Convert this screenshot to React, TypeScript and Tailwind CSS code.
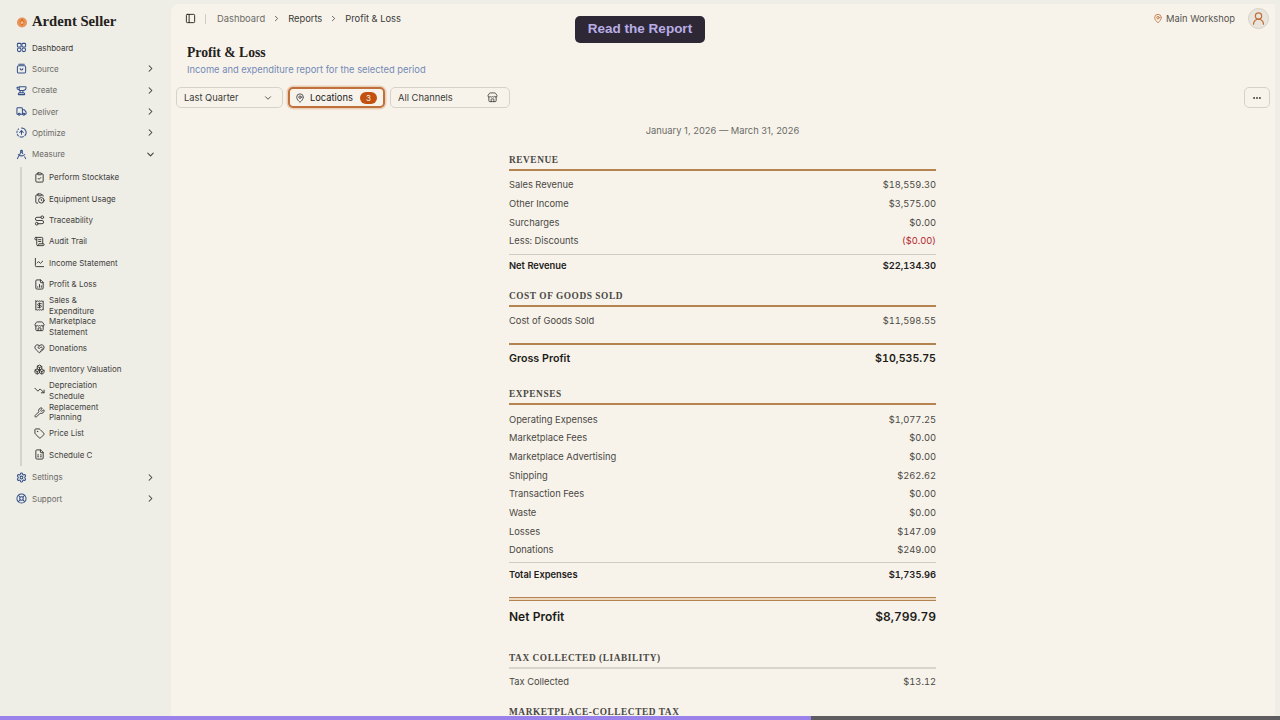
import {
  Anvil,
  Boxes,
  ChartLine,
  ChevronDown,
  ChevronRight,
  CircleFadingArrowUp,
  ClipboardCheck,
  ClipboardClock,
  DraftingCompass,
  Ellipsis,
  FileChartColumn,
  FileSpreadsheet,
  HeartHandshake,
  LifeBuoy,
  MapPin,
  PanelLeft,
  Receipt,
  Route,
  ScrollText,
  Settings,
  Store,
  Tag,
  TrendingDown,
  Truck,
  UserRound,
  Wrench,
} from "lucide-react";
import type { ComponentType } from "react";

const SANS = "font-['Inter','Liberation_Sans',sans-serif]";
const SERIF = "font-['Liberation_Serif','DejaVu_Serif',serif]";

type IconType = ComponentType<{ className?: string; strokeWidth?: number }>;
type NavItem = { label: string; icon: IconType; chevron?: "right" | "down" };

// Cuatro piezas: dos cuadrados arriba, dos redondeados abajo
function DashboardIcon({ className, strokeWidth = 2 }: { className?: string; strokeWidth?: number }) {
  return (
    <svg viewBox="0 0 24 24" fill="none" stroke="currentColor" strokeWidth={strokeWidth} className={className}>
      <rect x="3" y="3" width="8" height="8" rx="2" />
      <rect x="13" y="3" width="8" height="8" rx="2" />
      <circle cx="7" cy="17" r="4" />
      <circle cx="17" cy="17" r="4" />
    </svg>
  );
}

function SourceIcon({ className, strokeWidth = 2 }: { className?: string; strokeWidth?: number }) {
  return (
    <svg viewBox="0 0 24 24" fill="none" stroke="currentColor" strokeWidth={strokeWidth} strokeLinecap="round" className={className}>
      <rect x="3" y="6" width="18" height="16" rx="3" />
      <path d="M6 2.5h12" />
      <path d="M9 12a3 3 0 0 0 6 0" />
    </svg>
  );
}

const topNav: NavItem[] = [
  { label: "Dashboard", icon: DashboardIcon },
  { label: "Source", icon: SourceIcon, chevron: "right" },
  { label: "Create", icon: Anvil, chevron: "right" },
  { label: "Deliver", icon: Truck, chevron: "right" },
  { label: "Optimize", icon: CircleFadingArrowUp, chevron: "right" },
  { label: "Measure", icon: DraftingCompass, chevron: "down" },
];

const subNav: { label: string; icon: IconType }[] = [
  { label: "Perform Stocktake", icon: ClipboardCheck },
  { label: "Equipment Usage", icon: ClipboardClock },
  { label: "Traceability", icon: Route },
  { label: "Audit Trail", icon: ScrollText },
  { label: "Income Statement", icon: ChartLine },
  { label: "Profit & Loss", icon: FileChartColumn },
  { label: "Sales & Expenditure", icon: Receipt },
  { label: "Marketplace Statement", icon: Store },
  { label: "Donations", icon: HeartHandshake },
  { label: "Inventory Valuation", icon: Boxes },
  { label: "Depreciation Schedule", icon: TrendingDown },
  { label: "Replacement Planning", icon: Wrench },
  { label: "Price List", icon: Tag },
  { label: "Schedule C", icon: FileSpreadsheet },
];

const bottomNav: NavItem[] = [
  { label: "Settings", icon: Settings, chevron: "right" },
  { label: "Support", icon: LifeBuoy, chevron: "right" },
];

function TopNavRow({ item }: { item: NavItem }) {
  const Icon = item.icon;
  return (
    <div className="flex h-[21.33px] items-center pl-4 pr-[15px]">
      <Icon className="h-[11px] w-[11px] shrink-0 text-[#34508a]" strokeWidth={2.2} />
      <span className={`ml-[5px] flex-1 text-[8px] ${item.label === "Dashboard" ? "text-[#3a3a38]" : "text-[#6b6b66]"}`}>
        {item.label}
      </span>
      {item.chevron === "right" && <ChevronRight className="h-[11px] w-[11px] text-[#3a3a38]" strokeWidth={2.2} />}
      {item.chevron === "down" && <ChevronDown className="h-[11px] w-[11px] text-[#3a3a38]" strokeWidth={2.2} />}
    </div>
  );
}

function Sidebar() {
  return (
    <aside className="flex w-[171px] shrink-0 flex-col bg-[#eeede6]">
      <div className="flex h-[37px] items-end pb-[8px] pl-[16px]">
        <svg viewBox="0 0 12 12" className="mb-[1px] h-[12px] w-[12px]">
          <circle cx="6" cy="6.5" r="5" fill="#e8935a" />
          <path d="M6 2.5 8.5 6 6 10 3.5 6Z" fill="#d9691f" />
          <circle cx="6" cy="6.5" r="1.5" fill="#f2b98c" />
        </svg>
        <span className={`${SERIF} ml-[4px] text-[14.67px] font-bold leading-[16px] text-[#24211c]`}>Ardent Seller</span>
      </div>
      <div>
        {topNav.map((item) => (
          <TopNavRow key={item.label} item={item} />
        ))}
      </div>
      <div className="ml-[20px] mt-[2px] border-l-2 border-[#d5d4cc] pl-[12px]">
        {subNav.map(({ label, icon: Icon }) => (
          <div key={label} className="flex h-[21.33px] items-center">
            <Icon className="h-[11px] w-[11px] shrink-0 text-[#3a3a38]" strokeWidth={2.1} />
            <span className="ml-[4px] w-[74px] shrink-0 whitespace-normal text-[8px] leading-[10.67px] text-[#3f3f3c]">
              {label}
            </span>
          </div>
        ))}
      </div>
      <div className="mt-[1px]">
        {bottomNav.map((item) => (
          <TopNavRow key={item.label} item={item} />
        ))}
      </div>
    </aside>
  );
}

function Row({ label, value, variant }: { label: string; value: string; variant?: "total" | "red" }) {
  const total = variant === "total";
  return (
    <div
      className={`flex h-[18.67px] items-center justify-between text-[9.33px] tabular-nums ${
        total ? "font-semibold text-[#24211c]" : "text-[#4a4843]"
      }`}
    >
      <span>{label}</span>
      <span className={variant === "red" ? "text-[#b3262e]" : ""}>{value}</span>
    </div>
  );
}

function SectionHead({ title, muted }: { title: string; muted?: boolean }) {
  return (
    <div
      className={`${SERIF} border-b-2 pb-[2px] text-[9.33px] font-bold leading-[13px] tracking-[0.56px] text-[#4a4843] ${
        muted ? "border-[#d9d5cd]" : "border-[#b5834f]"
      }`}
    >
      {title}
    </div>
  );
}

function Report() {
  return (
    <div className="mx-auto w-[427px]">
      <SectionHead title="REVENUE" />
      <div className="mt-[5px]">
        <Row label="Sales Revenue" value="$18,559.30" />
        <Row label="Other Income" value="$3,575.00" />
        <Row label="Surcharges" value="$0.00" />
        <Row label="Less: Discounts" value="($0.00)" variant="red" />
      </div>
      <div className="mt-[3px] border-t border-[#cfccc4] pt-[2.5px]">
        <Row label="Net Revenue" value="$22,134.30" variant="total" />
      </div>

      <div className="mt-[14px]">
        <SectionHead title="COST OF GOODS SOLD" />
      </div>
      <div className="mt-[4.5px]">
        <Row label="Cost of Goods Sold" value="$11,598.55" />
      </div>
      <div className="mt-[13px] flex h-[31px] items-center justify-between border-t-2 border-[#b5834f] text-[10.67px] font-semibold tabular-nums text-[#1d1b17]">
        <span>Gross Profit</span>
        <span>$10,535.75</span>
      </div>

      <div className="mt-[14.5px]">
        <SectionHead title="EXPENSES" />
      </div>
      <div className="mt-[5px]">
        <Row label="Operating Expenses" value="$1,077.25" />
        <Row label="Marketplace Fees" value="$0.00" />
        <Row label="Marketplace Advertising" value="$0.00" />
        <Row label="Shipping" value="$262.62" />
        <Row label="Transaction Fees" value="$0.00" />
        <Row label="Waste" value="$0.00" />
        <Row label="Losses" value="$147.09" />
        <Row label="Donations" value="$249.00" />
      </div>
      <div className="mt-[2px] border-t border-[#cfccc4] pt-[3px]">
        <Row label="Total Expenses" value="$1,735.96" variant="total" />
      </div>
      <div className="mt-[13px] h-[4px] border-y border-[#b5834f] bg-[#ecd9c0]" />
      <div className="flex h-[31px] items-center justify-between text-[12px] font-semibold tabular-nums text-[#1d1b17]">
        <span>Net Profit</span>
        <span>$8,799.79</span>
      </div>

      <div className="mt-[19.5px]">
        <SectionHead title="TAX COLLECTED (LIABILITY)" muted />
      </div>
      <div className="mt-[4px]">
        <Row label="Tax Collected" value="$13.12" />
      </div>
      <div className={`${SERIF} mt-[14.5px] text-[9.33px] font-bold leading-[13px] tracking-[0.56px] text-[#4a4843]`}>
        MARKETPLACE-COLLECTED TAX
      </div>
    </div>
  );
}

function Toolbar() {
  return (
    <div className="mt-[10px] flex items-center pl-[5px] pr-[5px] text-[9.33px] text-[#3a3a38]">
      <div className="flex h-[21px] w-[107px] items-center justify-between rounded-[5px] border border-[#d5d2ca] pl-[7px] pr-[9px]">
        <span>Last Quarter</span>
        <ChevronDown className="h-[10px] w-[10px]" strokeWidth={2} />
      </div>
      <div className="ml-[5px] flex h-[21px] w-[97px] items-center rounded-[5px] border-2 border-[#c0703a] pl-[5px] pr-[6px] shadow-[0_0_0_1.5px_#e9cfb8]">
        <MapPin className="h-[10px] w-[10px]" strokeWidth={2} />
        <span className="ml-[5px] flex-1 text-[#24211c]">Locations</span>
        <span className="flex h-[12px] w-[17px] items-center justify-center rounded-full bg-[#c2500f] text-[8px] text-[#f7f3eb]">
          3
        </span>
      </div>
      <div className="ml-[5px] flex h-[21px] w-[120px] items-center justify-between rounded-[5px] border border-[#d5d2ca] pl-[7px] pr-[11px]">
        <span>All Channels</span>
        <Store className="h-[11px] w-[11px]" strokeWidth={1.8} />
      </div>
      <div className="ml-auto flex h-[21px] w-[26px] items-center justify-center rounded-[5px] border border-[#d5d2ca]">
        <Ellipsis className="h-[10px] w-[10px]" strokeWidth={2.5} />
      </div>
    </div>
  );
}

export default function App() {
  return (
    <div className={`${SANS} relative flex h-screen w-full overflow-hidden bg-[#eeede6]`}>
      <Sidebar />
      <main className="mr-[5px] mt-[4px] min-w-0 flex-1 overflow-hidden rounded-tl-[8px] bg-[#f7f3eb]">
        <header className="flex h-[29px] items-center pl-[14px] pr-[6px] text-[9.33px]">
          <PanelLeft className="h-[11px] w-[11px] text-[#24211c]" strokeWidth={2} />
          <div className="ml-[9px] mr-[11px] h-[10px] w-px bg-[#cfccc4]" />
          <span className="text-[#6b6b66]">Dashboard</span>
          <ChevronRight className="mx-[7px] h-[9px] w-[9px] text-[#3a3a38]" strokeWidth={2} />
          <span className="text-[#3a3a38]">Reports</span>
          <ChevronRight className="mx-[7px] h-[9px] w-[9px] text-[#3a3a38]" strokeWidth={2} />
          <span className="text-[#3a3a38]">Profit &amp; Loss</span>
          <div className="ml-auto flex items-center">
            <MapPin className="h-[11px] w-[10px] text-[#c0703a]" strokeWidth={2} />
            <span className="ml-[3px] text-[#55534e]">Main Workshop</span>
            <div className="ml-[13px] flex h-[21px] w-[21px] items-center justify-center rounded-full border border-[#d5d2ca] bg-[#e9e5dd]">
              <UserRound className="h-[15px] w-[15px] text-[#c0703a]" strokeWidth={2} />
            </div>
          </div>
        </header>
        <div className="mt-[11px] pl-[16px]">
          <h1 className={`${SERIF} text-[13.67px] font-bold leading-[18px] text-[#24211c]`}>Profit &amp; Loss</h1>
          <p className="mt-[1px] text-[9.33px] leading-[14px] text-[#7389b5]">
            Income and expenditure report for the selected period
          </p>
        </div>
        <Toolbar />
        <div className="pr-[1px]">
          <p className="mt-[15.5px] text-center text-[9.33px] leading-[14px] text-[#6b6b66]">
            January 1, 2026 — March 31, 2026
          </p>
          <div className="mt-[16.5px]">
            <Report />
          </div>
        </div>
      </main>

      <div className="absolute left-[575px] top-[16px] flex h-[27px] w-[130px] items-center justify-center rounded-[5px] bg-[#2e2836] font-['Liberation_Sans',sans-serif] text-[13.5px] font-bold text-[#b9aee6]">
        Read the Report
      </div>
      <div className="absolute bottom-0 left-0 h-[4px] w-full bg-[#5f5c60]">
        <div className="h-full w-[811px] bg-[#9a82ea]" />
      </div>
    </div>
  );
}
